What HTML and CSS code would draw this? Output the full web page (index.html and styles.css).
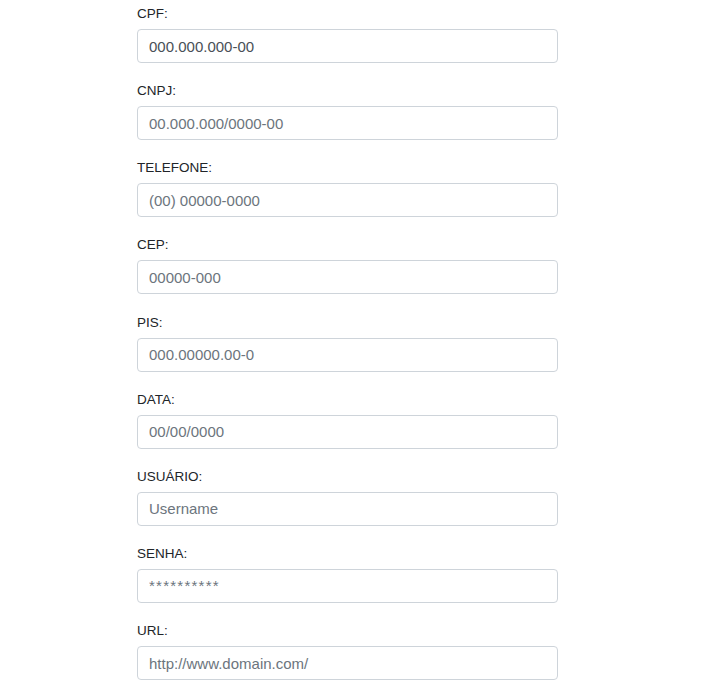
FILE: index.html
```html
<!DOCTYPE html>
<html lang="pt-BR">
<head>
<meta charset="utf-8">
<title>Formulário</title>
<link rel="stylesheet" href="styles.css">
</head>
<body>
<form class="form">
  <div class="field">
    <label class="label" for="cpf">CPF:</label>
    <input class="input" id="cpf" type="text" value="000.000.000-00">
  </div>
  <div class="field">
    <label class="label" for="cnpj">CNPJ:</label>
    <input class="input" id="cnpj" type="text" placeholder="00.000.000/0000-00">
  </div>
  <div class="field">
    <label class="label" for="tel">TELEFONE:</label>
    <input class="input" id="tel" type="text" placeholder="(00) 00000-0000">
  </div>
  <div class="field">
    <label class="label" for="cep">CEP:</label>
    <input class="input" id="cep" type="text" placeholder="00000-000">
  </div>
  <div class="field">
    <label class="label" for="pis">PIS:</label>
    <input class="input" id="pis" type="text" placeholder="000.00000.00-0">
  </div>
  <div class="field">
    <label class="label" for="data">DATA:</label>
    <input class="input" id="data" type="text" placeholder="00/00/0000">
  </div>
  <div class="field">
    <label class="label" for="user">USUÁRIO:</label>
    <input class="input" id="user" type="text" placeholder="Username">
  </div>
  <div class="field">
    <label class="label" for="senha">SENHA:</label>
    <input class="input input-secret" id="senha" type="text" placeholder="**********">
  </div>
  <div class="field">
    <label class="label" for="url">URL:</label>
    <input class="input" id="url" type="text" placeholder="http://www.domain.com/">
  </div>
</form>
</body>
</html>
```

FILE: styles.css
```css
html, body {
  margin: 0;
  padding: 0;
  background: #ffffff;
}

body {
  font-family: "Liberation Sans", Arial, sans-serif;
  color: #212529;
}

.form {
  width: 421px;
  margin-left: 137px;
  padding-top: 4px;
  display: flex;
  flex-direction: column;
  gap: 18.15px;
}

.field {
  display: flex;
  flex-direction: column;
}

.label {
  font-size: 13.5px;
  line-height: 20px;
  margin-bottom: 5px;
  color: #212529;
}

.input {
  box-sizing: border-box;
  height: 34px;
  width: 100%;
  margin: 0;
  padding: 0 11px;
  font-family: "Liberation Sans", Arial, sans-serif;
  font-size: 15px;
  color: #495057;
  background: #ffffff;
  border: 1px solid #ced4da;
  border-radius: 4px;
  outline: none;
}

.input::placeholder {
  color: #6c757d;
  opacity: 1;
}

.input-secret::placeholder {
  letter-spacing: 1.25px;
}
```
